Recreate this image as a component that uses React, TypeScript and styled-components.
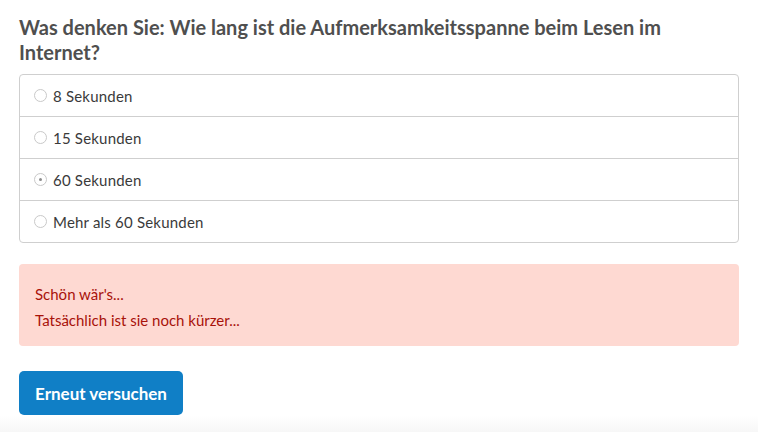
import styled, { createGlobalStyle } from "styled-components";

const GlobalStyle = createGlobalStyle`
  html, body {
    margin: 0;
    padding: 0;
    background: #fff;
  }
  body {
    font-family: Lato, "Open Sans", "Liberation Sans", sans-serif;
  }
`;

const Page = styled.div`
  width: 758px;
  height: 432px;
  box-sizing: border-box;
  padding: 15px 19px 0 19px;
  display: flex;
  flex-direction: column;
  background: linear-gradient(to bottom, #fff 0, #fff 416px, #f7f7f7 432px);
`;

const Question = styled.h2`
  margin: 0 0 9px 0;
  max-width: 670px;
  font-size: 20px;
  line-height: 25px;
  font-weight: 700;
  color: #4f4f4f;
`;

const Options = styled.div`
  border: 1px solid #cfcfcf;
  border-radius: 4px;
  display: flex;
  flex-direction: column;
`;

const Option = styled.label`
  height: 41px;
  display: flex;
  align-items: center;
  gap: 6px;
  padding: 0 0 0 14px;
  font-size: 15px;
  letter-spacing: 0.2px;
  color: #3a3a3a;
  & + & {
    border-top: 1px solid #cfcfcf;
  }
`;

const Radio = styled.span<{ $checked?: boolean }>`
  width: 11px;
  height: 11px;
  border: 1px solid #c9c9c9;
  border-radius: 50%;
  background: #fff;
  display: flex;
  align-items: center;
  justify-content: center;
  box-sizing: content-box;
  &::after {
    content: "";
    width: 3px;
    height: 3px;
    border-radius: 50%;
    background: ${(p) => (p.$checked ? "#8c8c8c" : "transparent")};
  }
`;

const Feedback = styled.div`
  margin-top: 21px;
  background: #fed9d2;
  border-radius: 4px;
  padding: 21px 16px 17px 16px;
  display: flex;
  flex-direction: column;
  gap: 8px;
  color: #a8120a;
  font-size: 15px;
  line-height: 18px;
`;

const Retry = styled.button`
  margin-top: 25px;
  align-self: flex-start;
  width: 164px;
  height: 44px;
  border: none;
  border-radius: 5px;
  background: #107fc6;
  color: #fff;
  font-family: inherit;
  font-size: 17px;
  font-weight: 700;
  cursor: pointer;
`;

const options = [
  { label: "8 Sekunden", checked: false },
  { label: "15 Sekunden", checked: false },
  { label: "60 Sekunden", checked: true },
  { label: "Mehr als 60 Sekunden", checked: false },
];

export default function App() {
  return (
    <>
      <GlobalStyle />
      <Page>
        <Question>
          Was denken Sie: Wie lang ist die Aufmerksamkeitsspanne beim Lesen im
          Internet?
        </Question>
        <Options>
          {options.map((o) => (
            <Option key={o.label}>
              <Radio $checked={o.checked} />
              {o.label}
            </Option>
          ))}
        </Options>
        <Feedback>
          <div>Schön wär's...</div>
          <div>Tatsächlich ist sie noch kürzer...</div>
        </Feedback>
        <Retry>Erneut versuchen</Retry>
      </Page>
    </>
  );
}
